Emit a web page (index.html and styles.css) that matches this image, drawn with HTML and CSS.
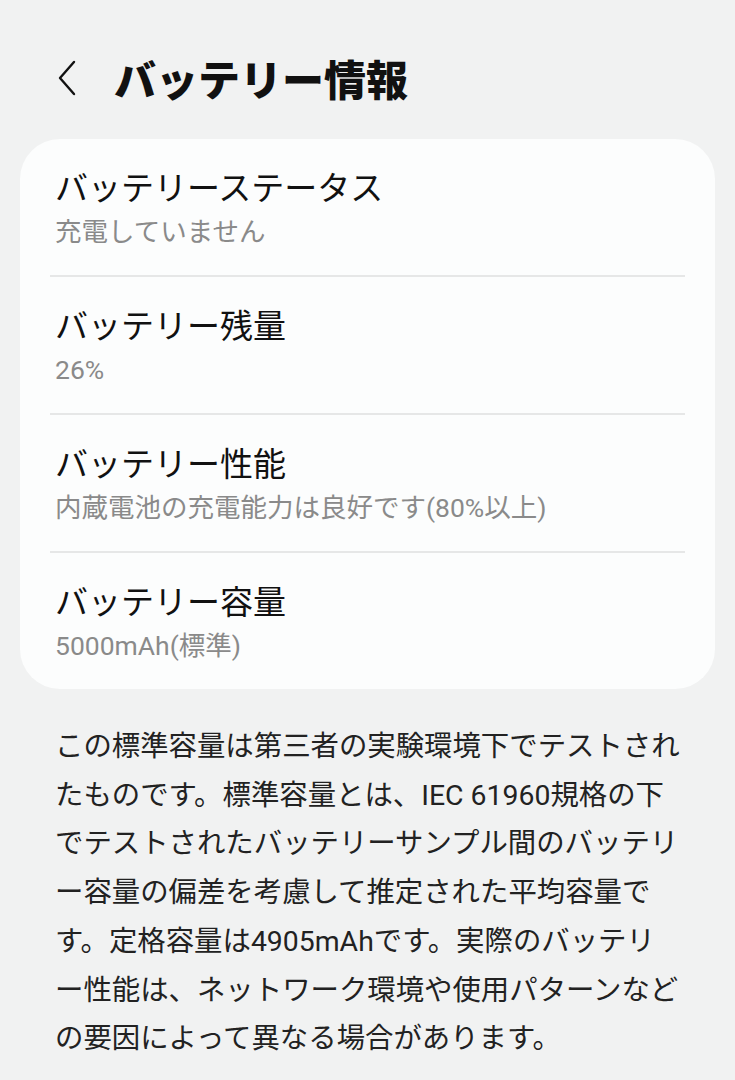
FILE: index.html
```html
<!DOCTYPE html>
<html lang="ja">
<head>
<meta charset="utf-8">
<title>バッテリー情報</title>
<link rel="stylesheet" href="styles.css">
</head>
<body>
<header class="appbar">
  <span class="back" aria-label="戻る">
    <svg width="20" height="36" viewBox="0 0 20 36"><path d="M17 2 L3 18 L17 34" fill="none" stroke="#111" stroke-width="2.4" stroke-linecap="round" stroke-linejoin="round"/></svg>
  </span>
  <h1 class="title">バッテリー情報</h1>
</header>
<main>
  <section class="card">
    <div class="row">
      <div class="row-title">バッテリーステータス</div>
      <div class="row-sub">充電していません</div>
    </div>
    <div class="row">
      <div class="row-title">バッテリー残量</div>
      <div class="row-sub">26%</div>
    </div>
    <div class="row">
      <div class="row-title">バッテリー性能</div>
      <div class="row-sub">内蔵電池の充電能力は良好です(80%以上)</div>
    </div>
    <div class="row">
      <div class="row-title">バッテリー容量</div>
      <div class="row-sub">5000mAh(標準)</div>
    </div>
  </section>
  <p class="note">この標準容量は第三者の実験環境下でテストされ<br>たものです。標準容量とは、IEC 61960規格の下<br>でテストされたバッテリーサンプル間のバッテリ<br>ー容量の偏差を考慮して推定された平均容量で<br>す。定格容量は4905mAhです。実際のバッテリ<br>ー性能は、ネットワーク環境や使用パターンなど<br>の要因によって異なる場合があります。</p>
</main>
</body>
</html>
```
FILE: styles.css
```css
html, body {
  margin: 0;
  padding: 0;
  background: #f1f2f2;
}
body {
  font-family: Roboto, "Noto Sans CJK JP", sans-serif;
  color: #111;
  width: 735px;
  height: 1080px;
  overflow: hidden;
}
.appbar {
  display: flex;
  align-items: center;
  height: 84px;
  margin-top: 36px;
  padding-left: 57px;
}
.back {
  display: flex;
  width: 20px;
  height: 36px;
  margin-right: 37px;
}
.title {
  margin: 0;
  font-family: "Noto Sans CJK JP", sans-serif;
  font-size: 42px;
  font-weight: 900;
  line-height: 50px;
}
.card {
  margin: 19px 20px 0;
  background: #fcfdfd;
  border-radius: 40px;
  padding: 0 30px;
}
.row {
  padding: 30px 5px 26px;
  border-bottom: 2px solid #e6e7e7;
}
.row:last-child {
  border-bottom: none;
}
.row-title {
  font-size: 33px;
  line-height: 40px;
  color: #111;
}
.row-sub {
  margin-top: 6px;
  font-size: 26.5px;
  line-height: 34px;
  color: #8a8a8a;
}
.note {
  margin: 34px 40px 0 55px;
  font-size: 28.4px;
  line-height: 48.7px;
  color: #222;
  white-space: nowrap;
}
```
